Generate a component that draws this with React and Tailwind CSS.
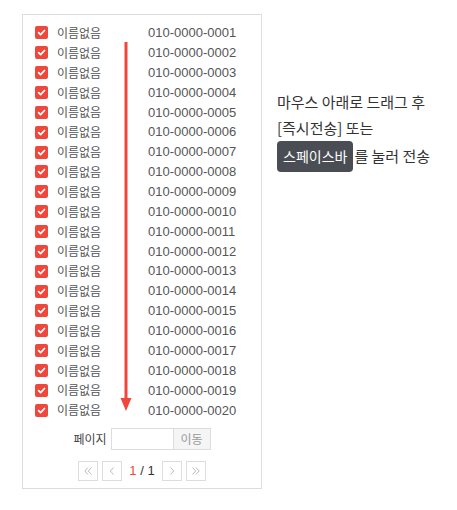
import React from "react";

const FONT = { fontFamily: '"Liberation Sans", "Noto Sans CJK KR", sans-serif' };
const KR = { fontFamily: '"Noto Sans CJK KR", "Liberation Sans", sans-serif' };

function Check() {
  return (
    <span className="flex h-[13px] w-[13px] shrink-0 items-center justify-center rounded-[2px] bg-[#f0473c]">
      <svg width="9" height="9" viewBox="0 0 10 10" fill="none">
        <path d="M1.8 5.2 L4 7.3 L8.3 2.8" stroke="#fff" strokeWidth="1.9" strokeLinecap="round" strokeLinejoin="round" />
      </svg>
    </span>
  );
}

function Row({ n }) {
  const num = String(n).padStart(4, "0");
  return (
    <div className="flex h-[19.87px] items-center">
      <Check />
      <span className="ml-[9px] w-[91px] text-[12px] text-[#555]" style={KR}>이름없음</span>
      <span className="text-[13px] text-[#555]" style={FONT}>010-0000-{num}</span>
    </div>
  );
}

function PgBtn({ children }) {
  return (
    <span className="flex h-[20px] w-[20px] items-center justify-center border border-[#ddd] bg-white">
      {children}
    </span>
  );
}

export default function App() {
  const rows = Array.from({ length: 20 }, (_, i) => i + 1);
  return (
    <div className="flex items-start gap-[15px] bg-white pl-[22px] pt-[14px]" style={FONT}>
      <div className="relative w-[240px] border border-[#ddd] px-[12px] pt-[8px] pb-[7px]">
        <div className="flex flex-col">
          {rows.map((n) => (
            <Row key={n} n={n} />
          ))}
        </div>
        {/* drag arrow overlay */}
        <svg className="absolute left-[97px] top-[27px]" width="12" height="370" viewBox="0 0 12 370">
          <line x1="6" y1="0" x2="6" y2="360" stroke="#f0473c" strokeWidth="3" />
          <path d="M0.5 356 L11.5 356 L6 369 Z" fill="#f0473c" />
        </svg>
        <div className="mt-[8px] flex items-center justify-center">
          <span className="mr-[4px] text-[12px] text-[#444]" style={KR}>페이지</span>
          <div className="flex h-[22px] border border-[#ddd]">
            <span className="w-[61px] bg-white" />
            <span className="flex w-[37px] items-center justify-center border-l border-[#ddd] bg-[#f5f5f5] text-[12px] text-[#999]" style={KR}>이동</span>
          </div>
        </div>
        <div className="mt-[11px] flex items-center justify-center">
          <PgBtn>
            <svg width="10" height="10" viewBox="0 0 10 10" fill="none" stroke="#bbb" strokeWidth="1">
              <path d="M5 1.5 L1.8 5 L5 8.5 M8.5 1.5 L5.3 5 L8.5 8.5" />
            </svg>
          </PgBtn>
          <span className="ml-[4px]">
            <PgBtn>
              <svg width="10" height="10" viewBox="0 0 10 10" fill="none" stroke="#bbb" strokeWidth="1">
                <path d="M6.5 1.5 L3.3 5 L6.5 8.5" />
              </svg>
            </PgBtn>
          </span>
          <span className="mx-[7px] text-[13px] text-[#333]">
            <span className="text-[#f0473c]">1</span> / 1
          </span>
          <PgBtn>
            <svg width="10" height="10" viewBox="0 0 10 10" fill="none" stroke="#bbb" strokeWidth="1">
              <path d="M3.5 1.5 L6.7 5 L3.5 8.5" />
            </svg>
          </PgBtn>
          <span className="ml-[4px]">
            <PgBtn>
              <svg width="10" height="10" viewBox="0 0 10 10" fill="none" stroke="#bbb" strokeWidth="1">
                <path d="M1.5 1.5 L4.7 5 L1.5 8.5 M5 1.5 L8.2 5 L5 8.5" />
              </svg>
            </PgBtn>
          </span>
        </div>
      </div>
      <div className="mt-[75px] text-[15px] text-[#333]" style={KR}>
        <div className="flex h-[26px] items-center">마우스 아래로 드래그 후</div>
        <div className="flex h-[26px] items-center">[즉시전송] 또는</div>
        <div className="flex items-center">
          <span className="flex h-[31px] items-center rounded-[4px] bg-[#4a4e54] px-[6px] text-[14px] text-white">스페이스바</span>
          <span className="ml-[1px]">를 눌러 전송</span>
        </div>
      </div>
    </div>
  );
}
